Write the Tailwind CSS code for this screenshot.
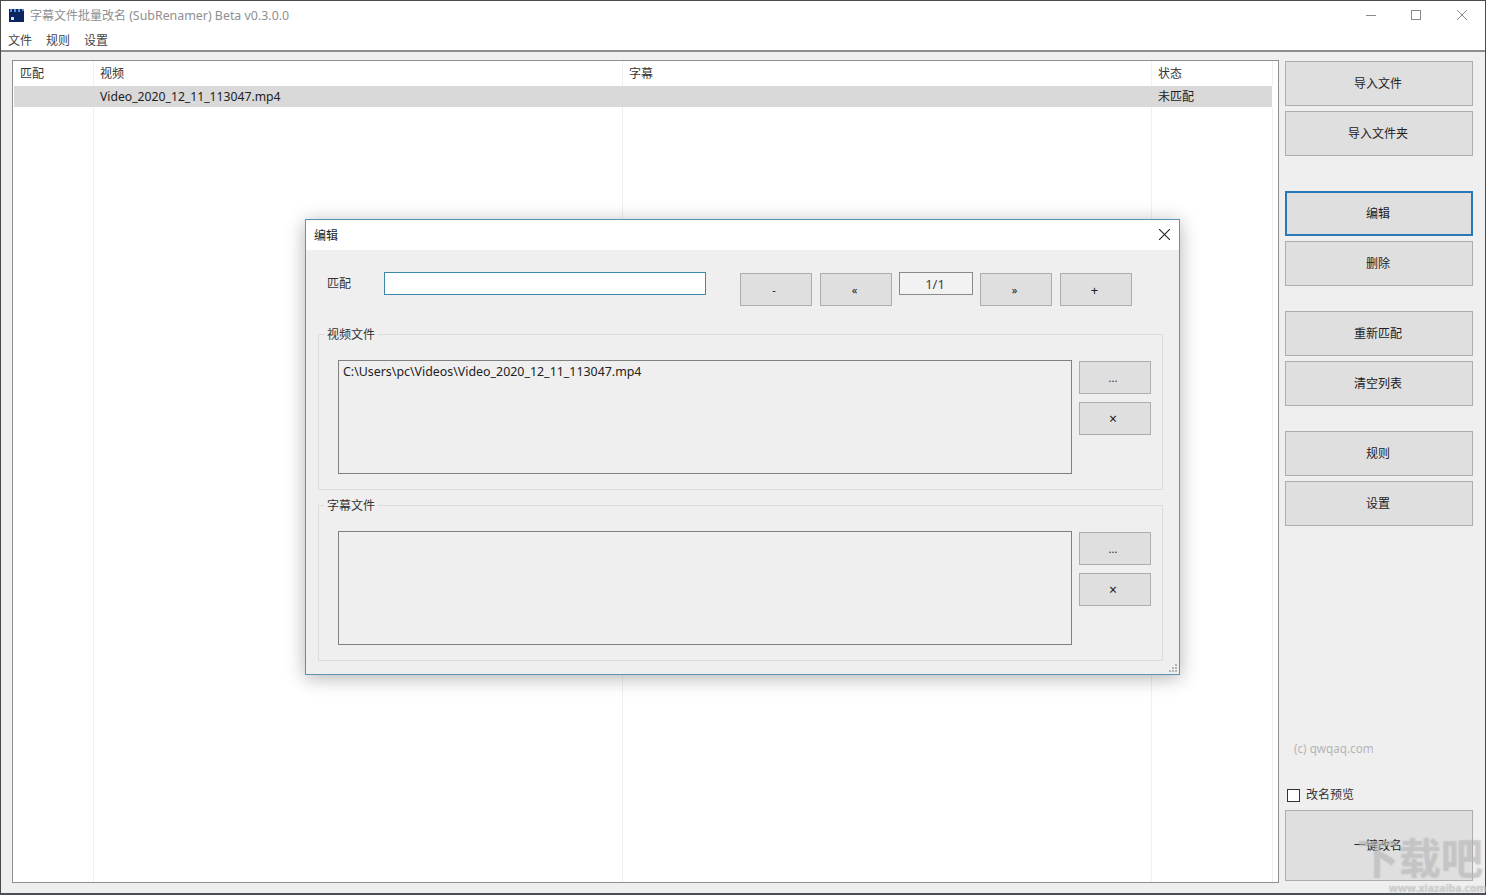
<!DOCTYPE html>
<html lang="zh-CN">
<head>
    <meta charset="UTF-8">
    <script src="https://cdn.jsdelivr.net/npm/@tailwindcss/browser@4"></script>
    <title>字幕文件批量改名 (SubRenamer) Beta v0.3.0.0</title>
</head>
<body class="w-[1486px] h-[895px] overflow-hidden bg-[#efefef] text-[12px] leading-[16px] text-[#1c1c1c] font-['Noto_Sans','Noto_Sans_CJK_SC',sans-serif]">
    <div id="window" class="relative w-full h-full flex flex-col border border-[#4a4a4a] border-b-[2px] border-b-[#4a4f55]">

        <!-- title + menu -->
        <div class="h-[51px] shrink-0 bg-white border-b-[2px] border-b-[#8e8e8e] flex flex-col">
            <div class="h-[30px] flex items-center">
                <svg class="ml-[8px] w-[15px] h-[13px] mb-[1px]" viewBox="0 0 15 13">
                    <rect width="15" height="13" fill="#0c2461"/>
                    <path d="M1 0h2v3H1zM5 0h2v3H5zM9 0h2v3H9zM13 0h2v2h-2z" fill="#5b8fd9"/>
                    <rect x="2" y="8" width="3" height="3" fill="#cfe0f5"/>
                </svg>
                <span class="ml-[6px] text-[#8f8f8f]">字幕文件批量改名 <span class="text-[12.4px]">(SubRenamer) Beta v0.3.0.0</span></span>
                <div class="ml-auto flex items-center mb-[2px]">
                    <svg class="w-[12px] h-[12px] mr-[33px]" viewBox="0 0 12 12"><path d="M1 6.5h10" stroke="#8a8a8a"/></svg>
                    <svg class="w-[12px] h-[12px] mr-[34px]" viewBox="0 0 12 12"><rect x="1.5" y="1.5" width="9" height="9" fill="none" stroke="#8a8a8a"/></svg>
                    <svg class="w-[12px] h-[12px] mr-[17px]" viewBox="0 0 12 12"><path d="M1 1l10 10M11 1L1 11" stroke="#8a8a8a"/></svg>
                </div>
            </div>
            <div class="flex gap-[14px] pl-[7px] text-[#444] mt-[2px]">
                <span>文件</span><span>规则</span><span>设置</span>
            </div>
        </div>

        <!-- main area -->
        <div class="flex-1 flex pl-[11px] pt-[8px] pb-[10px]">
            <!-- table -->
            <div class="w-[1267px] bg-white border border-[#8f8f8f] flex flex-col relative">
                <div class="h-[25px] shrink-0 flex items-center text-[#333] pl-[1px]">
                    <div class="w-[80px] h-full flex items-center pl-[6px] border-r border-[#f0f0f0]">匹配</div>
                    <div class="w-[529px] h-full flex items-center pl-[6px] border-r border-[#f0f0f0]">视频</div>
                    <div class="w-[529px] h-full flex items-center pl-[6px] border-r border-[#f0f0f0]">字幕</div>
                    <div class="w-[121px] h-full flex items-center pl-[6px] border-r border-[#f0f0f0]">状态</div>
                </div>
                <div class="h-[21px] shrink-0 ml-[1px] w-[1258px] bg-[#d9d9d9] flex items-center text-[#222]">
                    <div class="w-[80px]"></div>
                    <div class="w-[529px] pl-[6px] text-[12.2px]">Video_2020_12_11_113047.mp4</div>
                    <div class="w-[529px]"></div>
                    <div class="w-[120px] pl-[6px]">未匹配</div>
                </div>
                <div class="flex-1 flex pl-[1px]">
                    <div class="w-[80px] border-r border-[#f0f0f0]"></div>
                    <div class="w-[529px] border-r border-[#f0f0f0]"></div>
                    <div class="w-[529px] border-r border-[#f0f0f0]"></div>
                    <div class="w-[121px] border-r border-[#f0f0f0]"></div>
                </div>
            </div>

            <!-- side buttons -->
            <div class="w-[188px] ml-[6px] pt-[1px] flex flex-col text-[#222]">
                <button class="h-[45px] shrink-0 pr-[2px] bg-[#dfdfdf] border border-[#adadad]">导入文件</button>
                <button class="h-[45px] shrink-0 pr-[2px] mt-[5px] bg-[#dfdfdf] border border-[#adadad]">导入文件夹</button>
                <button class="h-[45px] shrink-0 pr-[2px] mt-[35px] bg-[#dfdfdf] border-[2px] border-[#2a78b5]">编辑</button>
                <button class="h-[45px] shrink-0 pr-[2px] mt-[5px] bg-[#dfdfdf] border border-[#adadad]">删除</button>
                <button class="h-[45px] shrink-0 pr-[2px] mt-[25px] bg-[#dfdfdf] border border-[#adadad]">重新匹配</button>
                <button class="h-[45px] shrink-0 pr-[2px] mt-[5px] bg-[#dfdfdf] border border-[#adadad]">清空列表</button>
                <button class="h-[45px] shrink-0 pr-[2px] mt-[25px] bg-[#dfdfdf] border border-[#adadad]">规则</button>
                <button class="h-[45px] shrink-0 pr-[2px] mt-[5px] bg-[#dfdfdf] border border-[#adadad]">设置</button>
                <div class="mt-auto pl-[9px] text-[#b5b5b5] text-[11.7px]">(c) qwqaq.com</div>
                <label class="mt-[31px] flex items-center pl-[2px]">
                    <span class="w-[13px] h-[13px] bg-white border border-[#333]"></span>
                    <span class="ml-[6px] text-[#333]">改名预览</span>
                </label>
                <button class="h-[71px] shrink-0 pr-[2px] mt-[7px] mb-[2px] bg-[#dfdfdf] border border-[#adadad]">一键改名</button>
            </div>
        </div>

        <!-- edit dialog -->
        <div id="dialog" class="absolute left-[304px] top-[218px] w-[875px] h-[456px] bg-[#efefef] border border-[#5b93b5] shadow-[0_3px_18px_rgba(0,0,0,0.3)] flex flex-col">
            <div class="h-[30px] shrink-0 bg-white flex items-center justify-between pl-[8px] pr-[9px] text-[#222]">
                <span class="mt-[1px]">编辑</span>
                <svg class="w-[11px] h-[11px] mb-[1px]" viewBox="0 0 11 11"><path d="M0 0l11 11M11 0L0 11" stroke="#222" stroke-width="1.1"/></svg>
            </div>
            <div class="flex-1 flex flex-col px-[12px] relative">
                <div class="flex items-start pt-[22px] h-[84px] shrink-0">
                    <span class="ml-[9px] mt-[4px] text-[#333]">匹配</span>
                    <div class="ml-[33px] w-[322px] h-[23px] bg-white border border-[#3f86ad]"></div>
                    <button class="ml-[34px] w-[72px] h-[33px] mt-[1px] pr-[4px] bg-[#dfdfdf] border border-[#adadad] text-[11px]">-</button>
                    <button class="ml-[8px] w-[72px] h-[33px] mt-[1px] pr-[3px] bg-[#dfdfdf] border border-[#adadad] text-[11px]">«</button>
                    <div class="ml-[7px] w-[74px] h-[23px] border border-[#8a8a8a] flex items-center justify-center bg-[#f2f2f2] text-[#444] text-[13px] pr-[2px]">1/1</div>
                    <button class="ml-[7px] w-[72px] h-[33px] mt-[1px] pr-[3px] bg-[#dfdfdf] border border-[#adadad] text-[11px]">»</button>
                    <button class="ml-[8px] w-[72px] h-[33px] mt-[1px] pr-[3px] bg-[#dfdfdf] border border-[#adadad] text-[13px]">+</button>
                </div>

                <fieldset class="w-[845px] h-[156px] shrink-0 border border-[#dcdcdc] relative">
                    <span class="absolute left-[5px] top-[-8px] px-[3px] bg-[#efefef] text-[#333]">视频文件</span>
                    <div class="flex pl-[19px] pt-[25px]">
                        <div class="w-[734px] h-[114px] border border-[#808080] pl-[4px] pt-[3px] text-[#222] text-[12.4px]">C:\Users\pc\Videos\Video_2020_12_11_113047.mp4</div>
                        <div class="ml-[7px] pt-[1px] flex flex-col gap-[8px]">
                            <button class="w-[72px] h-[33px] pr-[4px] bg-[#dfdfdf] border border-[#adadad] text-[11px]">...</button>
                            <button class="w-[72px] h-[33px] pr-[4px] bg-[#dfdfdf] border border-[#adadad] text-[14px]">×</button>
                        </div>
                    </div>
                </fieldset>

                <fieldset class="w-[845px] h-[156px] shrink-0 mt-[15px] border border-[#dcdcdc] relative">
                    <span class="absolute left-[5px] top-[-8px] px-[3px] bg-[#efefef] text-[#333]">字幕文件</span>
                    <div class="flex pl-[19px] pt-[25px]">
                        <div class="w-[734px] h-[114px] border border-[#808080]"></div>
                        <div class="ml-[7px] pt-[1px] flex flex-col gap-[8px]">
                            <button class="w-[72px] h-[33px] pr-[4px] bg-[#dfdfdf] border border-[#adadad] text-[11px]">...</button>
                            <button class="w-[72px] h-[33px] pr-[4px] bg-[#dfdfdf] border border-[#adadad] text-[14px]">×</button>
                        </div>
                    </div>
                </fieldset>

                <!-- resize grip -->
                <svg class="absolute right-[1px] bottom-[1px] w-[9px] h-[9px]" viewBox="0 0 9 9" fill="#b5b5b5">
                    <rect x="6" y="0" width="2" height="2"/><rect x="3" y="3" width="2" height="2"/><rect x="6" y="3" width="2" height="2"/>
                    <rect x="0" y="6" width="2" height="2"/><rect x="3" y="6" width="2" height="2"/><rect x="6" y="6" width="2" height="2"/>
                </svg>
            </div>
        </div>

        <!-- site watermark -->
        <div class="absolute left-[1356px] top-[832px] text-white/35 [text-shadow:0_0_1px_rgba(110,110,110,0.5)] pointer-events-none">
            <div class="text-[42px] leading-[50px] font-bold">下载吧</div>
            <div class="ml-[32px] text-[10.5px] leading-[11px] font-bold">www.xiazaiba.com</div>
        </div>
    </div>
</body>
</html>
